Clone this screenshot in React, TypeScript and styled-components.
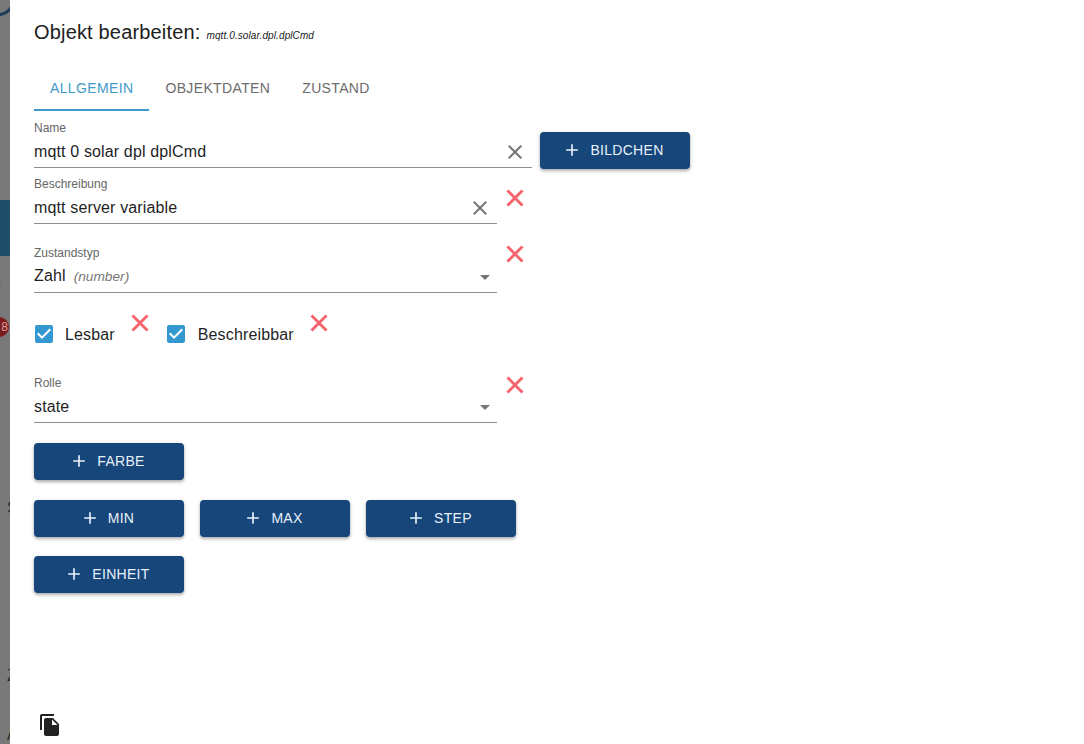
import { ReactNode } from "react";
import styled, { createGlobalStyle } from "styled-components";

const GlobalStyle = createGlobalStyle`
  html, body {
    margin: 0;
    padding: 0;
    background: #fff;
    overflow: hidden;
  }
  body {
    font-family: "Liberation Sans", Arial, sans-serif;
    color: #1f1f1f;
  }
`;

const Page = styled.div`
  display: flex;
  width: 1084px;
  height: 744px;
  overflow: hidden;
`;

// the app behind the dialog, only a 10px sliver is visible
const Backdrop = styled.div`
  position: relative;
  flex: 0 0 10px;
  height: 744px;
  overflow: hidden;
  background: #797979;
`;
const BackdropCorner = styled.div`
  position: absolute;
  left: -16px;
  top: -14px;
  width: 24px;
  height: 24px;
  border: 3px solid #1c3c5c;
  border-radius: 50%;
`;
const BackdropBand = styled.div`
  position: absolute;
  left: 0;
  top: 200px;
  width: 10px;
  height: 56px;
  background: #1d4d69;
`;
const BackdropBadge = styled.div`
  position: absolute;
  left: -11px;
  top: 317px;
  width: 20px;
  height: 20px;
  border-radius: 50%;
  background: #7c1c1c;
  color: #d9a0a0;
  font-size: 12px;
  line-height: 20px;
  text-align: right;
  padding-right: 1px;
  box-sizing: border-box;
`;
const BackdropLetter = styled.span<{ $top: number; $left: number }>`
  position: absolute;
  left: ${(p) => p.$left}px;
  top: ${(p) => p.$top}px;
  font-size: 16px;
  line-height: 18px;
  color: #2a2a2a;
`;

const Dialog = styled.div`
  flex: 1;
  display: flex;
  flex-direction: column;
  padding: 0 24px;
  background: #fff;
`;

const TitleLine = styled.div`
  display: flex;
  align-items: baseline;
  gap: 6px;
  padding-top: 20px;
  height: 50px;
  box-sizing: border-box;
  font-size: 20px;
  line-height: 24px;
  letter-spacing: 0.17px;
  color: #202020;
`;
const ObjectId = styled.span`
  font-size: 10px;
  font-style: italic;
  letter-spacing: 0.1px;
`;

const TabBar = styled.div`
  display: flex;
  height: 41px;
  margin-top: 20px;
`;
const Tab = styled.div<{ $active?: boolean }>`
  box-sizing: border-box;
  height: 41px;
  padding: 0 16px;
  line-height: 36px;
  font-size: 14px;
  letter-spacing: 0.36px;
  color: ${(p) => (p.$active ? "#3f9ac9" : "#6c6c6c")};
  border-bottom: 2px solid ${(p) => (p.$active ? "#3f9ac9" : "transparent")};
`;

const Row = styled.div<{ $top: number }>`
  display: flex;
  align-items: flex-start;
  margin-top: ${(p) => p.$top}px;
`;

const Field = styled.div<{ $wide?: boolean }>`
  box-sizing: border-box;
  width: ${(p) => (p.$wide ? 498 : 463)}px;
  height: 49px;
  position: relative;
  border-bottom: 1px solid #8f8f8f;
`;
const FieldLabel = styled.div`
  font-size: 12px;
  line-height: 14px;
  padding-top: 2px;
  color: #666;
`;
const FieldValue = styled.div<{ $top?: number }>`
  display: flex;
  align-items: baseline;
  gap: 8px;
  font-size: 16px;
  line-height: 20px;
  margin-top: ${(p) => p.$top ?? 7}px;
  letter-spacing: 0.14px;
  color: #1f1f1f;
`;
const Hint = styled.span`
  font-size: 13.7px;
  font-style: italic;
  letter-spacing: 0;
  color: #777;
`;
const ClearIcon = styled.span`
  position: absolute;
  right: 5px;
  bottom: 3px;
  display: flex;
  color: #757575;
`;
const Caret = styled.span`
  position: absolute;
  right: 7px;
  bottom: 12px;
  width: 0;
  height: 0;
  border-left: 5px solid transparent;
  border-right: 5px solid transparent;
  border-top: 5px solid #757575;
`;

const RemoveIcon = styled.span<{ $top: number; $left: number }>`
  display: flex;
  margin: ${(p) => p.$top}px 0 0 ${(p) => p.$left}px;
  color: #f4626a;
  stroke: #f4626a;
  stroke-width: 0.5px;
`;

const CheckLabel = styled.label<{ $left: number; $gap: number }>`
  display: flex;
  align-items: center;
  gap: ${(p) => p.$gap}px;
  margin-left: ${(p) => p.$left}px;
  font-size: 16px;
  letter-spacing: 0.14px;
  color: #1f1f1f;
`;
const CheckBoxIcon = styled.span`
  display: flex;
  color: #3498d0;
`;
const CheckText = styled.span`
  margin-top: 2px;
  line-height: 22px;
`;

const ActionButton = styled.button`
  box-sizing: border-box;
  display: flex;
  align-items: center;
  justify-content: center;
  gap: 8px;
  width: 150px;
  height: 37px;
  padding: 0 4px 2px 0;
  border: none;
  border-radius: 4px;
  background: #16467a;
  color: #e8f1fa;
  font-family: inherit;
  font-size: 14px;
  letter-spacing: 0.3px;
  box-shadow: 0 2px 3px rgba(0, 0, 0, 0.25), 0 1px 5px rgba(0, 0, 0, 0.12);
`;
const ButtonRow = styled.div<{ $top: number; $left?: number }>`
  display: flex;
  gap: 16px;
  margin-top: ${(p) => p.$top}px;
  margin-left: ${(p) => p.$left ?? 0}px;
`;

const Footer = styled.div`
  margin-top: auto;
  padding: 0 0 7px 4px;
  display: flex;
  color: #222;
`;

function Icon({ d, size = 24 }: { d: string; size?: number }) {
  return (
    <svg width={size} height={size} viewBox="0 0 24 24" fill="currentColor">
      <path d={d} />
    </svg>
  );
}

const CLOSE = "M19 6.41 17.59 5 12 10.59 6.41 5 5 6.41 10.59 12 5 17.59 6.41 19 12 13.41 17.59 19 19 17.59 13.41 12z";
const ADD = "M19 13h-6v6h-2v-6H5v-2h6V5h2v6h6v2z";
const COPY = "M16 1H4c-1.1 0-2 .9-2 2v14h2V3h12V1zm-1 4 6 6v10c0 1.1-.9 2-2 2H7.99C6.89 23 6 22.1 6 21l.01-14c0-1.1.89-2 1.99-2h7zm-1 7h5.5L14 6.5V12z";
const CHECKED = "M19 3H5c-1.11 0-2 .9-2 2v14c0 1.1.89 2 2 2h14c1.11 0 2-.9 2-2V5c0-1.1-.89-2-2-2zm-9 14l-5-5 1.41-1.41L10 14.17l7.59-7.59L19 8l-9 9z";

const ClearButton = () => (
  <ClearIcon>
    <Icon d={CLOSE} />
  </ClearIcon>
);

function RemoveButton({ top, left }: { top: number; left: number }) {
  return (
    <RemoveIcon $top={top} $left={left}>
      <Icon d={CLOSE} size={28} />
    </RemoveIcon>
  );
}

function Check({ left, gap, children }: { left: number; gap: number; children: ReactNode }) {
  return (
    <CheckLabel $left={left} $gap={gap}>
      <CheckBoxIcon>
        <Icon d={CHECKED} />
      </CheckBoxIcon>
      <CheckText>{children}</CheckText>
    </CheckLabel>
  );
}

function AddButton({ children }: { children: ReactNode }) {
  return (
    <ActionButton>
      <Icon d={ADD} size={20} />
      {children}
    </ActionButton>
  );
}

export default function App() {
  return (
    <Page>
      <GlobalStyle />
      <Backdrop>
        <BackdropCorner />
        <BackdropBand />
        <BackdropBadge>8</BackdropBadge>
        <BackdropLetter $top={163} $left={-3}>l</BackdropLetter>
        <BackdropLetter $top={274} $left={-3}>:</BackdropLetter>
        <BackdropLetter $top={390} $left={-3}>l</BackdropLetter>
        <BackdropLetter $top={499} $left={7}>S</BackdropLetter>
        <BackdropLetter $top={667} $left={7}>Z</BackdropLetter>
        <BackdropLetter $top={726} $left={7}>A</BackdropLetter>
      </Backdrop>
      <Dialog>
        <TitleLine>
          Objekt bearbeiten: <ObjectId>mqtt.0.solar.dpl.dplCmd</ObjectId>
        </TitleLine>
        <TabBar>
          <Tab $active>ALLGEMEIN</Tab>
          <Tab>OBJEKTDATEN</Tab>
          <Tab>ZUSTAND</Tab>
        </TabBar>

        <Row $top={8}>
          <Field $wide>
            <FieldLabel>Name</FieldLabel>
            <FieldValue>mqtt 0 solar dpl dplCmd</FieldValue>
            <ClearButton />
          </Field>
          <ButtonRow $top={13} $left={8}>
            <AddButton>BILDCHEN</AddButton>
          </ButtonRow>
        </Row>

        <Row $top={6}>
          <Field>
            <FieldLabel>Beschreibung</FieldLabel>
            <FieldValue>mqtt server variable</FieldValue>
            <ClearButton />
          </Field>
          <RemoveButton top={9} left={4} />
        </Row>

        <Row $top={20}>
          <Field>
            <FieldLabel>Zustandstyp</FieldLabel>
            <FieldValue $top={6}>
              Zahl <Hint>(number)</Hint>
            </FieldValue>
            <Caret />
          </Field>
          <RemoveButton top={-4} left={4} />
        </Row>

        <Row $top={29}>
          <Check left={-2} gap={9}>Lesbar</Check>
          <RemoveButton top={-13} left={11} />
          <Check left={10} gap={10}>Beschreibbar</Check>
          <RemoveButton top={-13} left={11.5} />
        </Row>

        <Row $top={28}>
          <Field>
            <FieldLabel>Rolle</FieldLabel>
            <FieldValue>state</FieldValue>
            <Caret />
          </Field>
          <RemoveButton top={-3} left={4} />
        </Row>

        <ButtonRow $top={20}>
          <AddButton>FARBE</AddButton>
        </ButtonRow>
        <ButtonRow $top={20}>
          <AddButton>MIN</AddButton>
          <AddButton>MAX</AddButton>
          <AddButton>STEP</AddButton>
        </ButtonRow>
        <ButtonRow $top={19}>
          <AddButton>EINHEIT</AddButton>
        </ButtonRow>

        <Footer>
          <Icon d={COPY} />
        </Footer>
      </Dialog>
    </Page>
  );
}
